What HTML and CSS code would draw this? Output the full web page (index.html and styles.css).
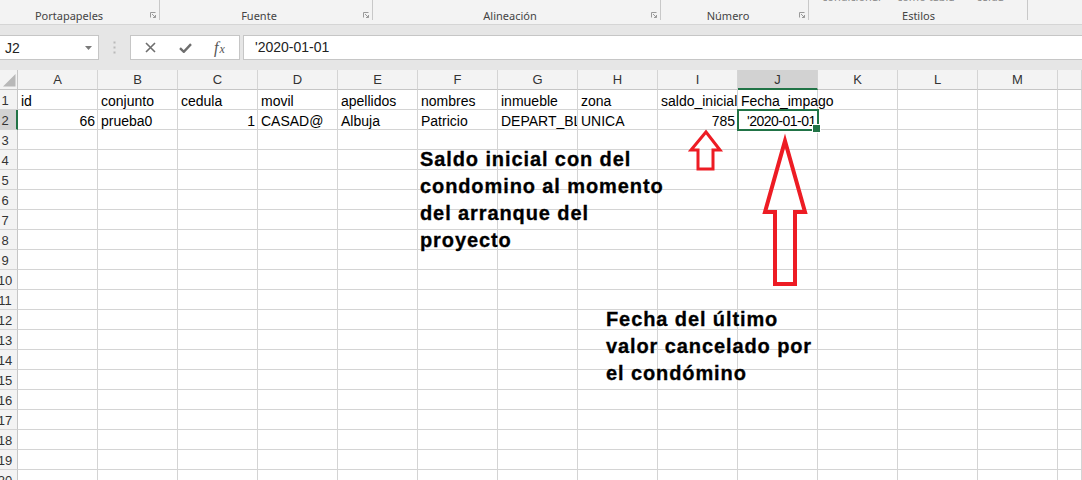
FILE: index.html
```html
<!DOCTYPE html>
<html lang="es">

<head>
    <meta charset="UTF-8">
    <title>Libro1 - Excel</title>
    <link rel="stylesheet" href="styles.css">
</head>

<body>
    <div class="ribbon">
        <div class="group g-clip">
            <span class="group-label">Portapapeles</span>
            <svg class="launcher" viewBox="0 0 6 6"><path d="M0.5 5.5V0.5H5.5" /><path d="M2 2l3.5 3.5M5.5 3v2.5H3" /></svg>
        </div>
        <div class="group g-font">
            <span class="group-label">Fuente</span>
            <svg class="launcher" viewBox="0 0 6 6"><path d="M0.5 5.5V0.5H5.5" /><path d="M2 2l3.5 3.5M5.5 3v2.5H3" /></svg>
        </div>
        <div class="group g-align">
            <span class="group-label">Alineación</span>
            <svg class="launcher" viewBox="0 0 6 6"><path d="M0.5 5.5V0.5H5.5" /><path d="M2 2l3.5 3.5M5.5 3v2.5H3" /></svg>
        </div>
        <div class="group g-number">
            <span class="group-label">Número</span>
            <svg class="launcher" viewBox="0 0 6 6"><path d="M0.5 5.5V0.5H5.5" /><path d="M2 2l3.5 3.5M5.5 3v2.5H3" /></svg>
        </div>
        <div class="group g-styles">
            <div class="cut-line"><span>condicional</span><span>como tabla</span><span>celda</span></div>
            <span class="group-label">Estilos</span>
        </div>
        <div class="group g-rest"></div>
    </div>

    <div class="formula-area">
        <div class="name-box">
            <span>J2</span>
            <svg width="7" height="4" viewBox="0 0 7 4"><path d="M0 0h7L3.5 4z" fill="#7a7a7a" /></svg>
        </div>
        <div class="grip">
            <svg width="3" height="13" viewBox="0 0 3 13">
                <rect x="0.5" y="0.5" width="2" height="2" fill="#b9b9b9" />
                <rect x="0.5" y="5.5" width="2" height="2" fill="#b9b9b9" />
                <rect x="0.5" y="10.5" width="2" height="2" fill="#b9b9b9" />
            </svg>
        </div>
        <div class="fx-buttons">
            <span class="fx-btn btn-cancel">
                <svg width="11" height="11" viewBox="0 0 11 11"><path d="M1 1l9 9M10 1l-9 9" stroke="#6e6e6e" stroke-width="1.6" /></svg>
            </span>
            <span class="fx-btn btn-enter">
                <svg width="13" height="10" viewBox="0 0 13 10"><path d="M1 5.2l3.8 3.6L12 1.2" stroke="#6e6e6e" stroke-width="2.4" fill="none" /></svg>
            </span>
            <span class="fx-btn btn-fx"><i>f</i><i class="x">x</i></span>
        </div>
        <div class="formula-input">'2020-01-01</div>
    </div>

    <div class="sheet" id="sheet"></div>

    <div class="note note-saldo">Saldo inicial con del<br>condomino al momento<br>del arranque del<br>proyecto</div>
    <div class="note note-fecha">Fecha del último<br>valor cancelado por<br>el condómino</div>

    <svg class="arrows" viewBox="0 0 1082 480">
        <polygon points="706,132 720,150 713,150 713,169 698,169 698,150 691,150" stroke-width="3" />
        <polygon points="785,141 805,212 795,212 795,284 775,284 775,212 765,212" stroke-width="4" />
    </svg>

    <script>
        const letters = ['A', 'B', 'C', 'D', 'E', 'F', 'G', 'H', 'I', 'J', 'K', 'L', 'M', ''];
        const data = {
            1: ['id', 'conjunto', 'cedula', 'movil', 'apellidos', 'nombres', 'inmueble', 'zona', 'saldo_inicial', 'Fecha_impago'],
            2: [66, 'prueba0', 1, 'CASAD@', 'Albuja', 'Patricio', 'DEPART_BLO', 'UNICA', 785, "'2020-01-01"]
        };

        let html = '<div class="row head"><div class="corner">' +
            '<svg width="18" height="19" viewBox="0 0 18 19"><path d="M3 16.5H15.5V4z" fill="#b8b8b8" /></svg></div>';
        letters.forEach((l, i) => {
            let cls = 'colhead';
            if (l === 'J') cls += ' sel';
            if (i === letters.length - 1) cls += ' last';
            html += `<div class="${cls}">${l}</div>`;
        });
        html += '</div>';

        for (let r = 1; r <= 20; r++) {
            const values = data[r] || [];
            html += `<div class="row"><div class="rowhead${r === 2 ? ' sel' : ''}"><span>${r}</span></div>`;
            letters.forEach((l, i) => {
                const v = values[i];
                let cls = 'cell';
                let text = v === undefined ? '' : v;
                if (typeof v === 'number') cls += ' num';
                // text runs on into an empty neighbour, like in Excel
                if (typeof v === 'string' && values[i + 1] === undefined) cls += ' spill';
                if (i === letters.length - 1) cls += ' last';
                if (r === 2 && l === 'J') {
                    cls += ' active';
                    text = `${v}<span class="caret"></span>`;
                }
                html += `<div class="${cls}">${text}</div>`;
            });
            html += '</div>';
        }

        document.getElementById('sheet').innerHTML = html;
    </script>
</body>

</html>
```

FILE: styles.css
```css
* {
    box-sizing: border-box;
}

body {
    margin: 0;
    width: 1082px;
    height: 480px;
    overflow: hidden;
    position: relative;
    background: #fff;
    font-family: "Liberation Sans", Arial, sans-serif;
}

/* ribbon (bottom strip only) */
.ribbon {
    display: flex;
    height: 25px;
    background: #f3f3f3;
    border-bottom: 1px solid #d5d5d5;
    font-family: "Noto Sans", "Open Sans", sans-serif;
    font-size: 11px;
    color: #444;
}

.group {
    display: flex;
    align-items: flex-end;
    height: 24px;
    flex: none;
    background: linear-gradient(#c8c8c8, #c8c8c8) right top / 1px 20px no-repeat;
}

.group-label {
    flex: 1;
    text-align: center;
    line-height: 16px;
    padding-bottom: 0;
    white-space: nowrap;
}

.launcher {
    width: 6px;
    height: 6px;
    flex: none;
    margin: 0 4px 6px 0;
    fill: none;
    stroke: #9a9a9a;
    stroke-width: 1;
}

.g-clip {
    width: 160px;
}

.g-clip .group-label {
    padding-right: 12px;
}

.g-font {
    width: 213px;
}

.g-font .group-label {
    padding-right: 5px;
}

.g-align {
    width: 288px;
}

.g-align .group-label {
    padding-right: 4px;
}

.g-number {
    width: 148px;
}

.g-number .group-label {
    padding-right: 4px;
}

.g-styles {
    width: 219px;
    flex-direction: column;
    align-items: stretch;
    justify-content: space-between;
}

.g-styles .group-label {
    flex: none;
}

.g-rest {
    flex: 1;
    background: none;
}

.cut-line {
    display: flex;
    gap: 16px;
    margin-top: -9px;
    padding-left: 13px;
    line-height: 12px;
    color: #8a8a8a;
    white-space: nowrap;
}

.cut-line span:last-child {
    margin-left: 6px;
}

/* name box + formula bar */
.formula-area {
    display: flex;
    align-items: flex-start;
    height: 45px;
    padding-top: 10px;
    background: #e6e6e6;
}

.name-box {
    width: 100px;
    height: 25px;
    margin-left: -1px;
    display: flex;
    align-items: center;
    padding-left: 5px;
    background: #fff;
    border: 1px solid #c6c6c6;
    font-size: 14px;
    color: #222;
}

.name-box svg {
    margin-left: auto;
    margin-right: 6px;
}

.grip {
    height: 25px;
    margin-left: 14px;
    display: flex;
    align-items: center;
}

.fx-buttons {
    width: 110px;
    height: 25px;
    margin-left: 14px;
    display: flex;
    align-items: center;
    background: #fff;
    border: 1px solid #c6c6c6;
}

.fx-btn {
    display: flex;
    justify-content: center;
    align-items: center;
    height: 23px;
}

.btn-cancel {
    width: 39px;
}

.btn-enter {
    width: 31px;
}

.btn-fx {
    width: 37px;
    font-family: "Liberation Serif", "Times New Roman", serif;
    color: #555;
}

.btn-fx i {
    font-size: 16px;
}

.btn-fx .x {
    font-size: 12px;
    margin-top: 3px;
    margin-left: 1px;
}

.formula-input {
    flex: 1;
    height: 25px;
    margin-left: 3px;
    margin-right: -1px;
    padding-left: 11px;
    background: #fff;
    border: 1px solid #c6c6c6;
    font-size: 14px;
    line-height: 23px;
    color: #222;
}

/* grid */
.sheet {
    font-size: 14px;
    color: #000;
}

.row {
    display: flex;
    height: 20px;
}

.corner {
    width: 18px;
    flex: none;
    background: #f3f3f3;
    border-right: 1px solid #c6c6c6;
    border-bottom: 1px solid #c6c6c6;
}

.corner svg {
    display: block;
}

.colhead {
    width: 80px;
    flex: none;
    background: #f3f3f3;
    border-right: 1px solid #d4d4d4;
    border-bottom: 1px solid #c6c6c6;
    text-align: center;
    font-size: 13px;
    line-height: 19px;
    color: #333;
}

.colhead.sel {
    background: #d2d2d2;
    border-bottom: 2px solid #217346;
}

.rowhead {
    width: 18px;
    flex: none;
    overflow: hidden;
    background: #f3f3f3;
    border-right: 1px solid #c6c6c6;
    border-bottom: 1px solid #d4d4d4;
    font-size: 13px;
    color: #333;
}

.rowhead span {
    display: block;
    width: 26px;
    margin-left: -8px;
    padding-top: 2px;
    text-align: center;
    line-height: 18px;
}

.rowhead.sel {
    background: #d2d2d2;
    border-right: 2px solid #217346;
}

.cell {
    width: 80px;
    flex: none;
    height: 20px;
    padding: 2px 3px 0;
    line-height: 18px;
    white-space: nowrap;
    overflow: hidden;
    border-right: 1px solid #d4d4d4;
    border-bottom: 1px solid #d4d4d4;
}

.cell.spill {
    overflow: visible;
}

.cell.last,
.colhead.last {
    flex: 1;
    width: auto;
}

.cell.num {
    text-align: right;
    padding-right: 2px;
}

.cell.active {
    position: relative;
    z-index: 2;
    overflow: visible;
    padding-left: 9px;
    letter-spacing: -0.5px;
    outline: 2px solid #217346;
    outline-offset: -1px;
}

.cell.active::after {
    content: "";
    position: absolute;
    right: -4px;
    bottom: -4px;
    width: 7px;
    height: 7px;
    background: #217346;
    border: 1px solid #fff;
}

.caret {
    display: inline-block;
    width: 1px;
    height: 15px;
    margin-left: 1px;
    vertical-align: -3px;
    background: #000;
}

/* annotations drawn over the sheet */
.note {
    position: absolute;
    font-weight: bold;
    font-size: 20px;
    line-height: 27px;
    letter-spacing: 0.9px;
    -webkit-text-stroke: 0.3px #000;
    color: #000;
    white-space: nowrap;
}

.note-saldo {
    left: 420px;
    top: 146px;
}

.note-fecha {
    left: 606px;
    top: 306px;
}

.arrows {
    position: absolute;
    left: 0;
    top: 0;
    width: 1082px;
    height: 480px;
    pointer-events: none;
}

.arrows polygon {
    fill: none;
    stroke: #ed1c24;
    stroke-linejoin: miter;
}
```
